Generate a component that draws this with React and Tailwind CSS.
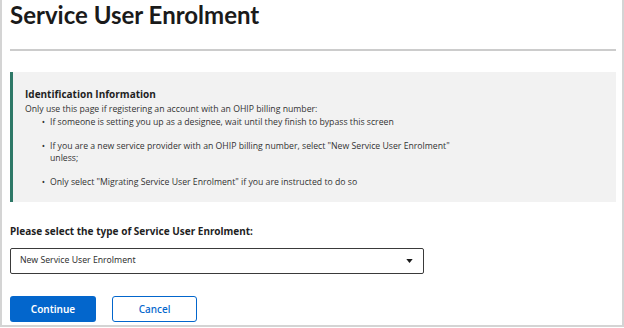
import React from "react";

function App() {
  const items = [
    ["If someone is setting you up as a designee, wait until they finish to bypass this screen"],
    ["If you are a new service provider with an OHIP billing number, select \"New Service User Enrolment\"", "unless;"],
    ["Only select \"Migrating Service User Enrolment\" if you are instructed to do so"],
  ];

  return (
    <div className="w-[624px] h-[328px] overflow-hidden bg-white" style={{ fontFamily: '"Open Sans", sans-serif' }}>
      <div className="h-[327px] border-l-2 border-r-2 border-b-2 border-[#d4d4d4] pl-[8px] pr-[6px]">
        <h1
          className="text-[24px] leading-[30px] font-bold text-[#1a1a1a]"
          style={{ fontFamily: 'Lato, sans-serif' }}
        >
          Service User Enrolment
        </h1>
        <div className="mt-[19px] h-[2px] bg-[#cccccc]" />

        <div className="mt-[21px] h-[130px] bg-[#f2f2f2] border-l-[3px] border-[#2e7867] pl-[12px] pt-[15px] text-[#333333]">
          <h2 className="text-[10px] leading-[14px] font-bold text-[#1f1f1f]">Identification Information</h2>
          <p className="mt-[2px] text-[8.7px] leading-[12px]">
            Only use this page if registering an account with an OHIP billing number:
          </p>
          <ul className="mt-[1px] pl-[16px] flex flex-col gap-[12px] text-[8.7px] leading-[12px]">
            {items.map((lines, i) => (
              <li key={i} className="flex">
                <span className="w-[5px] mr-[4px] text-center">•</span>
                <span>
                  {lines.map((l, j) => (
                    <span key={j} className="block">{l}</span>
                  ))}
                </span>
              </li>
            ))}
          </ul>
        </div>

        <label
          className="block mt-[22px] text-[10px] leading-[14px] font-bold text-[#1f1f1f]"
          style={{ fontFamily: '"Noto Sans", sans-serif' }}
        >
          Please select the type of Service User Enrolment:
        </label>
        <div className="mt-[10px] w-[414px] h-[26px] border-[1.5px] border-[#3a3a3a] rounded-[2px] flex items-center justify-between pl-[9px] pr-[10px]">
          <span className="text-[8.7px] text-[#333333]" style={{ fontFamily: '"Noto Sans", sans-serif' }}>
            New Service User Enrolment
          </span>
          <svg width="7" height="4" viewBox="0 0 8 5">
            <path d="M0 0 L8 0 L4 5 Z" fill="#1a1a1a" />
          </svg>
        </div>

        <div className="mt-[22px] flex gap-[16px]" style={{ fontFamily: '"Noto Sans", sans-serif' }}>
          <button className="w-[86px] h-[26px] bg-[#0366cc] rounded-[3px] text-white text-[10px] font-semibold">
            Continue
          </button>
          <button className="w-[85px] h-[26px] bg-white border border-[#0366cc] rounded-[3px] text-[#0366cc] text-[10px] font-medium">
            Cancel
          </button>
        </div>
      </div>
    </div>
  );
}

export default App;
